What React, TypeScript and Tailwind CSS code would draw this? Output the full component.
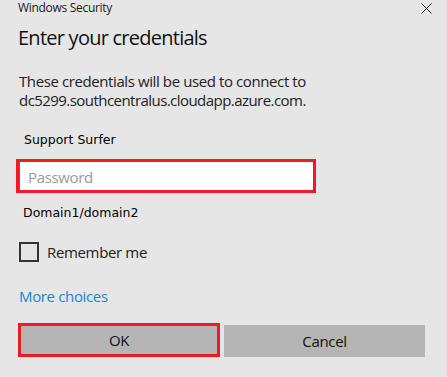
import React from "react";

const segoe = "font-['Open_Sans','Noto_Sans',sans-serif]";
const tahoma = "font-['DejaVu_Sans','Liberation_Sans',sans-serif]";

export default function App() {
  return (
    <div className="w-[447px] h-[377px] bg-[#e6e6e6] overflow-hidden text-[#1a1a1a]">
      {/* Title bar */}
      <div className="flex items-start justify-between h-[16px] pl-[18px] pr-[15px]">
        <span className={`${segoe} text-[12px] leading-[16px] tracking-[-0.3px]`}>
          Windows Security
        </span>
        <svg
          width="11"
          height="11"
          viewBox="0 0 11 11"
          className="mt-[3px]"
          stroke="#222"
          strokeWidth="1"
        >
          <path d="M0.5 0.5 L10.5 10.5 M10.5 0.5 L0.5 10.5" />
        </svg>
      </div>

      <div className="flex flex-col pl-[18px]">
        <h1 className={`${segoe} mt-[8px] text-[20px] leading-[28px] tracking-[-0.75px] text-[#111]`}>
          Enter your credentials
        </h1>

        <p className={`${segoe} mt-[20px] ml-[1px] text-[15px] leading-[19px] tracking-[-0.4px] text-[#222]`}>
          These credentials will be used to connect to
          <br />
          <span className="tracking-[-0.55px]">dc5299.southcentralus.cloudapp.azure.com.</span>
        </p>

        <div className={`${tahoma} mt-[22px] ml-[6px] text-[12.5px] leading-[16px] text-black`}>
          Support Surfer
        </div>

        <div className="mt-[11px] -ml-[2px] w-[300px] h-[34px] border-[3px] border-[#ed1c24] bg-white shadow-[inset_1px_0_0_#1a73e8] flex items-center pl-[9px] pt-[1px]">
          <span className={`${segoe} text-[15px] leading-[28px] tracking-[-0.35px] text-[#9a9a9a]`}>
            Password
          </span>
        </div>

        <div className={`${tahoma} mt-[12px] ml-[5px] text-[12.5px] leading-[16px] text-black`}>
          Domain1/domain2
        </div>

        <label className="mt-[21px] ml-[1px] flex items-center gap-[8px]">
          <span className="w-[20px] h-[20px] border-2 border-[#333]" />
          <span className={`${segoe} text-[15px] leading-[20px] tracking-[-0.35px] text-[#222]`}>
            Remember me
          </span>
        </label>

        <a className={`${segoe} mt-[24px] ml-[1px] text-[15px] leading-[20px] tracking-[-0.35px] text-[#1a86d8]`}>
          More choices
        </a>

        <div className="mt-[17px] flex items-start">
          <button className={`${segoe} w-[202px] h-[34px] border-[3px] border-[#ed1c24] bg-[#b5b5b5] text-[15px] text-[#111] tracking-[-0.35px]`}>
            OK
          </button>
          <button className={`${segoe} ml-[4px] mt-[2px] w-[201px] h-[32px] bg-[#b5b5b5] text-[15px] text-[#111] tracking-[-0.35px]`}>
            Cancel
          </button>
        </div>
      </div>
    </div>
  );
}
